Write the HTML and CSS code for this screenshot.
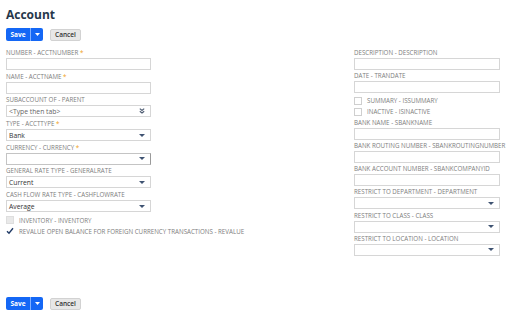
FILE: index.html
```html
<!DOCTYPE html>
<html>
<head>
<meta charset="utf-8">
<link rel="stylesheet" href="styles.css">
</head>
<body>
<div class="page">
  <h1 class="title">Account</h1>
  <div class="actions">
    <div class="save-group">
      <span class="save">Save</span>
      <span class="save-menu"><svg width="5" height="3" viewBox="0 0 5 3"><path d="M0 0H5L2.5 3Z" fill="#fff"/></svg></span>
    </div>
    <span class="cancel">Cancel</span>
  </div>

  <div class="form">
    <div class="col">
      <div class="field">
        <div class="lbl">NUMBER - ACCTNUMBER <span class="req">*</span></div>
        <div class="box"></div>
      </div>
      <div class="field">
        <div class="lbl">NAME - ACCTNAME <span class="req">*</span></div>
        <div class="box"></div>
      </div>
      <div class="field">
        <div class="lbl">SUBACCOUNT OF - PARENT</div>
        <div class="box"><span class="ph">&lt;Type then tab&gt;</span>
          <svg class="icon" width="6" height="6" viewBox="0 0 6 6"><path d="M0.8 0.6L3 2.4L5.2 0.6M0.8 3.2L3 5L5.2 3.2" fill="none" stroke="#4f5d73" stroke-width="1.2"/></svg>
        </div>
      </div>
      <div class="field">
        <div class="lbl">TYPE - ACCTTYPE <span class="req">*</span></div>
        <div class="box select"><span class="val">Bank</span><span class="arrow"></span></div>
      </div>
      <div class="field">
        <div class="lbl">CURRENCY - CURRENCY <span class="req">*</span></div>
        <div class="box select focus"><span class="val"></span><span class="arrow"></span></div>
      </div>
      <div class="field">
        <div class="lbl">GENERAL RATE TYPE - GENERALRATE</div>
        <div class="box select"><span class="val">Current</span><span class="arrow"></span></div>
      </div>
      <div class="field">
        <div class="lbl">CASH FLOW RATE TYPE - CASHFLOWRATE</div>
        <div class="box select"><span class="val">Average</span><span class="arrow"></span></div>
      </div>
      <div class="check-row">
        <span class="cb disabled"></span>
        <span class="cb-lbl">INVENTORY - INVENTORY</span>
      </div>
      <div class="check-row">
        <svg class="cbsvg" width="8" height="8" viewBox="0 0 8 8"><path d="M1 4.2L3 6.2L7 1.2" fill="none" stroke="#203a66" stroke-width="1.4"/></svg>
        <span class="cb-lbl">REVALUE OPEN BALANCE FOR FOREIGN CURRENCY TRANSACTIONS - REVALUE</span>
      </div>
    </div>

    <div class="col right">
      <div class="field">
        <div class="lbl">DESCRIPTION - DESCRIPTION</div>
        <div class="box"></div>
      </div>
      <div class="field">
        <div class="lbl">DATE - TRANDATE</div>
        <div class="box"></div>
      </div>
      <div class="check-row">
        <span class="cb"></span>
        <span class="cb-lbl">SUMMARY - ISSUMMARY</span>
      </div>
      <div class="check-row last">
        <span class="cb"></span>
        <span class="cb-lbl">INACTIVE - ISINACTIVE</span>
      </div>
      <div class="field">
        <div class="lbl">BANK NAME - SBANKNAME</div>
        <div class="box"></div>
      </div>
      <div class="field">
        <div class="lbl">BANK ROUTING NUMBER - SBANKROUTINGNUMBER</div>
        <div class="box"></div>
      </div>
      <div class="field">
        <div class="lbl">BANK ACCOUNT NUMBER - SBANKCOMPANYID</div>
        <div class="box"></div>
      </div>
      <div class="field">
        <div class="lbl">RESTRICT TO DEPARTMENT - DEPARTMENT</div>
        <div class="box select"><span class="val"></span><span class="arrow"></span></div>
      </div>
      <div class="field">
        <div class="lbl">RESTRICT TO CLASS - CLASS</div>
        <div class="box select"><span class="val"></span><span class="arrow"></span></div>
      </div>
      <div class="field">
        <div class="lbl">RESTRICT TO LOCATION - LOCATION</div>
        <div class="box select"><span class="val"></span><span class="arrow"></span></div>
      </div>
    </div>
  </div>

  <div class="actions bottom">
    <div class="save-group">
      <span class="save">Save</span>
      <span class="save-menu"><svg width="5" height="3" viewBox="0 0 5 3"><path d="M0 0H5L2.5 3Z" fill="#fff"/></svg></span>
    </div>
    <span class="cancel">Cancel</span>
  </div>
</div>
</body>
</html>
```

FILE: styles.css
```css
html, body {
  margin: 0;
  padding: 0;
  background: #ffffff;
}
body {
  font-family: "Open Sans", "DejaVu Sans", sans-serif;
  color: #333333;
}
.page {
  box-sizing: border-box;
  height: 320px;
  padding: 7px 0 10px 6px;
  display: flex;
  flex-direction: column;
}
.title {
  margin: 0;
  font-size: 12px;
  line-height: 16px;
  font-weight: 700;
  color: #26374a;
}
.actions {
  display: flex;
  align-items: center;
  gap: 7px;
  margin-top: 5px;
  height: 13px;
}
.actions.bottom {
  margin-top: auto;
}
.save-group {
  display: flex;
  height: 13px;
  border-radius: 2px;
  overflow: hidden;
  background: #1467f5;
}
.save {
  width: 24px;
  display: flex;
  align-items: center;
  justify-content: center;
  color: #ffffff;
  font-size: 6.5px;
  font-weight: 700;
}
.save-menu {
  width: 12px;
  border-left: 1px solid #7fb0ff;
  display: flex;
  align-items: center;
  justify-content: center;
}
.save-menu svg { display: block; }
.cancel {
  box-sizing: border-box;
  width: 31px;
  height: 12px;
  display: flex;
  align-items: center;
  justify-content: center;
  background: #e7e7e7;
  border: 1px solid #d2d2d2;
  border-radius: 2px;
  font-size: 6.5px;
  font-weight: 600;
  color: #333333;
}
.form {
  display: grid;
  grid-template-columns: 145px 146px;
  column-gap: 203px;
  align-items: start;
  margin-top: 8px;
}
.col {
  display: flex;
  flex-direction: column;
}
.field {
  margin-bottom: 2.7px;
}
.col.right .field {
  margin-bottom: 2.2px;
}
.lbl {
  font-size: 6.2px;
  line-height: 8px;
  height: 8px;
  color: #7d7d7d;
  white-space: nowrap;
  margin-bottom: 1px;
}
.req {
  color: #f0a020;
}
.box {
  box-sizing: border-box;
  height: 12px;
  border: 1px solid #d6d6d6;
  background: #ffffff;
  display: flex;
  align-items: center;
  padding: 0 5px 0 2px;
  font-size: 6.8px;
}
.box.focus {
  border-color: #c4c4c4;
  border-right-color: #9a9a9a;
}
.ph {
  color: #666666;
  flex: 1;
}
.val {
  flex: 1;
  color: #333333;
}
.icon {
  display: block;
  flex-shrink: 0;
}
.arrow {
  flex-shrink: 0;
  width: 0;
  height: 0;
  border-left: 3px solid transparent;
  border-right: 3px solid transparent;
  border-top: 3.5px solid #3f5372;
}
.check-row {
  height: 11px;
  display: flex;
  align-items: center;
  gap: 5px;
}
.check-row.last {
  margin-bottom: 1.5px;
}
.cb {
  flex-shrink: 0;
  box-sizing: border-box;
  width: 8px;
  height: 8px;
  border: 1px solid #cfcfcf;
  background: #ffffff;
}
.cb.disabled {
  background: #e9e9e9;
  border-color: #dedede;
}
.cbsvg {
  flex-shrink: 0;
  display: block;
  width: 8px;
  height: 8px;
}
.cb-lbl {
  font-size: 6.2px;
  color: #7d7d7d;
  white-space: nowrap;
}
```
